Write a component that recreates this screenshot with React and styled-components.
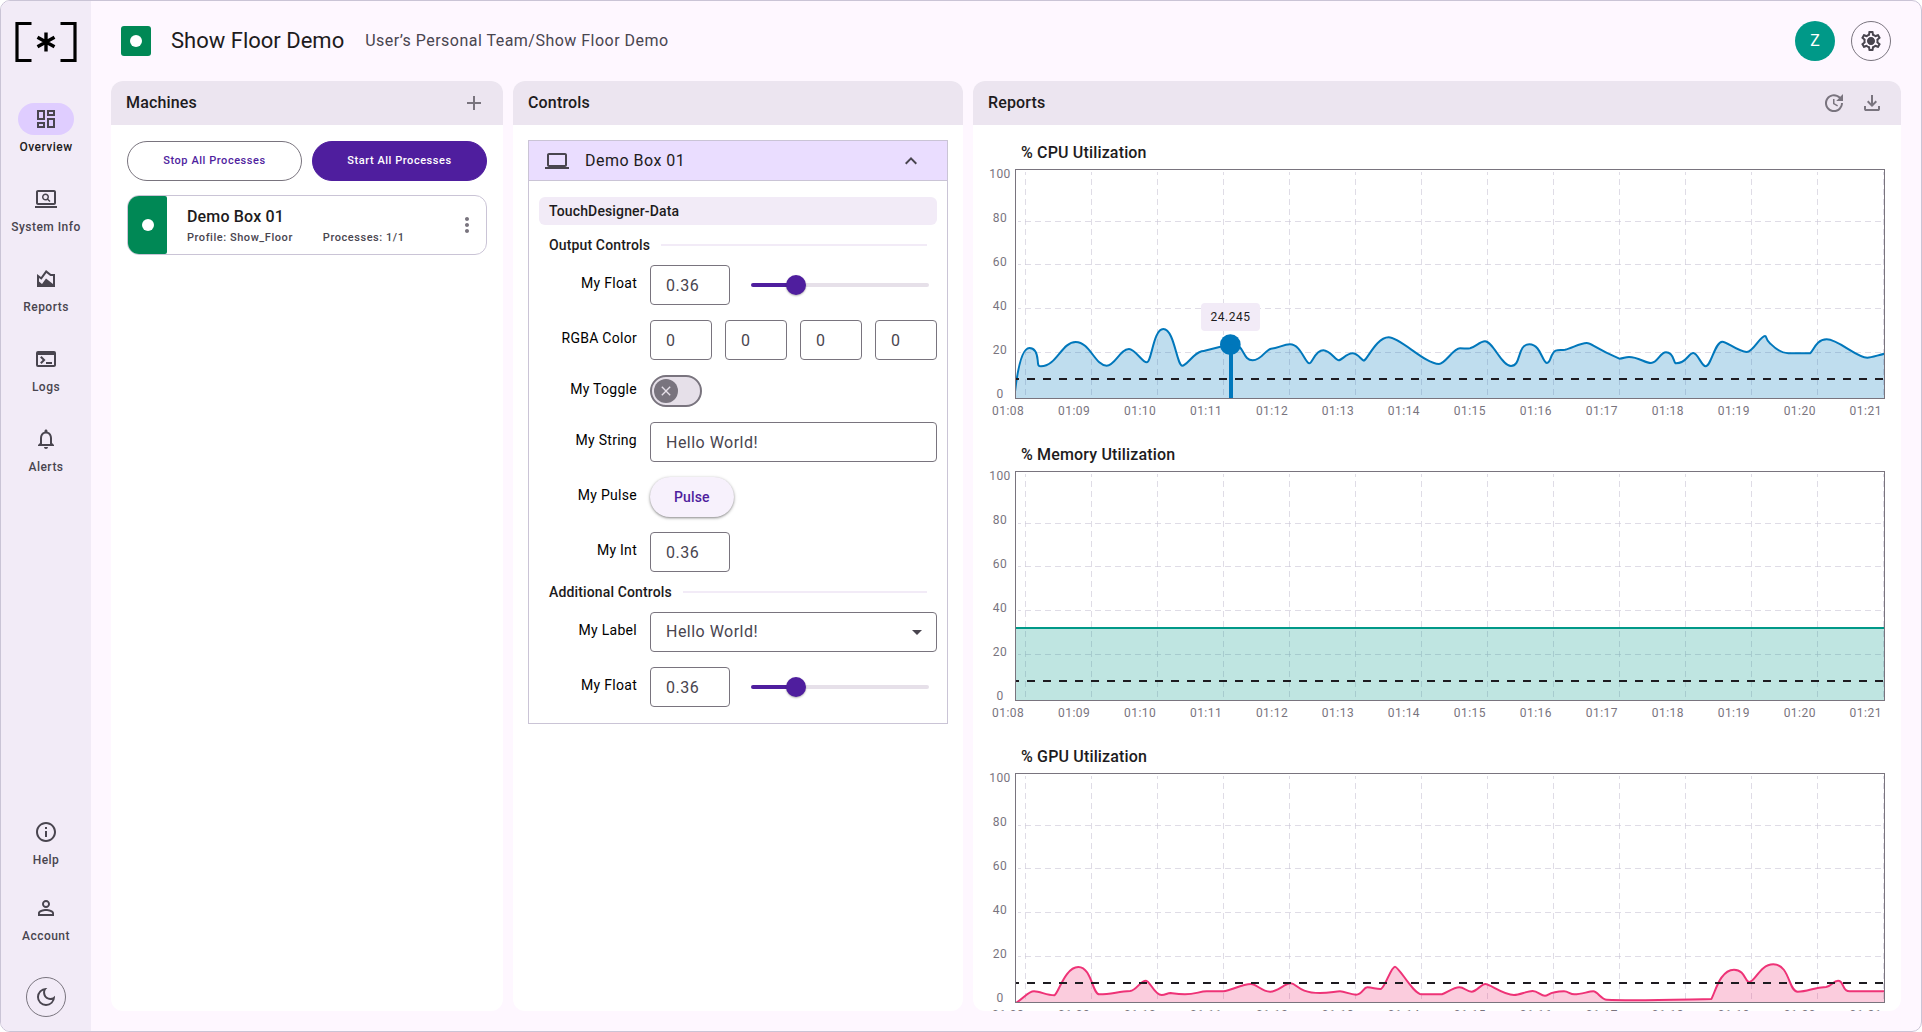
import React from "react";
import styled, { createGlobalStyle } from "styled-components";
import {
  MdOutlineDashboard,
  MdOutlineScreenSearchDesktop,
  MdOutlineAreaChart,
  MdOutlineTerminal,
  MdNotificationsNone,
  MdOutlineInfo,
  MdPersonOutline,
  MdOutlineDarkMode,
  MdOutlineSettings,
  MdUpdate,
  MdAdd,
  MdMoreVert,
  MdOutlineLaptop,
  MdExpandLess,
  MdArrowDropDown,
  MdClose,
} from "react-icons/md";

const color = {
  surface: "#fef7ff",
  surfaceLow: "#f2ebf7",
  surfaceHigh: "#ece5f0",
  white: "#ffffff",
  outline: "#79747e",
  outlineSoft: "#cac4d6",
  text: "#1d1b20",
  textSoft: "#49454f",
  primary: "#4f1e9e",
  primarySoft: "#eaddff",
  active: "#dfcdff",
  track: "#e6e0e9",
  green: "#008855",
  blue: "#0077bb",
  teal: "#009988",
  pink: "#ee3377",
};

const GlobalStyle = createGlobalStyle`
  *, *::before, *::after { box-sizing: border-box; }
  body { margin: 0; background: ${color.white}; }
  body, button, input, select { font-family: Roboto, "Noto Sans", sans-serif; }
  h1, h2, h3, h4, p { margin: 0; font-weight: inherit; }
`;

const Frame = styled.div`
  display: flex;
  height: 100vh;
  border: 1px solid ${color.outlineSoft};
  border-radius: 10px;
  overflow: hidden;
  background: ${color.surface};
  color: ${color.text};
`;

/* Side navigation */

const Sidebar = styled.nav`
  display: flex;
  flex-direction: column;
  align-items: center;
  flex: 0 0 90px;
  padding: 21px 0 14px;
  background: ${color.surfaceLow};
`;

const NavGroup = styled.div`
  display: flex;
  flex-direction: column;
  gap: ${(p) => p.$gap}px;
  margin-top: ${(p) => (p.$bottom ? "auto" : "41px")};
  margin-bottom: ${(p) => (p.$bottom ? "33px" : "0")};
`;

const NavLink = styled.a`
  display: flex;
  flex-direction: column;
  align-items: center;
  gap: 4px;
  font-size: 12px;
  font-weight: 500;
  line-height: 16px;
  letter-spacing: 0.04em;
  text-decoration: none;
  white-space: nowrap;
  color: ${(p) => (p.$active ? color.text : color.textSoft)};
`;

const NavPill = styled.span`
  display: flex;
  align-items: center;
  justify-content: center;
  width: 56px;
  height: 32px;
  border-radius: 16px;
  font-size: 24px;
  color: ${color.textSoft};
  background: ${(p) => (p.$active ? color.active : "transparent")};
`;

const RoundButton = styled.button`
  display: flex;
  align-items: center;
  justify-content: center;
  flex: none;
  width: 40px;
  height: 40px;
  padding: 0;
  border: 1px solid ${color.outline};
  border-radius: 50%;
  background: ${(p) => (p.$plain ? "transparent" : color.surface)};
  color: ${color.textSoft};
  font-size: 24px;
  cursor: pointer;
`;

/* Page header */

const Main = styled.main`
  display: flex;
  flex-direction: column;
  flex: 1;
  min-width: 0;
  padding: 0 20px 20px;
`;

const Header = styled.header`
  display: flex;
  align-items: center;
  flex: 0 0 80px;
  padding: 0 10px;
`;

const StatusBadge = styled.span`
  display: flex;
  align-items: center;
  justify-content: center;
  width: 30px;
  height: 30px;
  margin-right: 20px;
  border-radius: 3px;
  background: ${color.green};
`;

const Dot = styled.span`
  width: 12px;
  height: 12px;
  border-radius: 50%;
  background: ${color.white};
`;

const Title = styled.h1`
  font-size: 22px;
  font-weight: 400;
  line-height: 28px;
`;

const Breadcrumb = styled.p`
  margin-left: 21px;
  font-size: 16px;
  line-height: 24px;
  letter-spacing: 0.03em;
  color: ${color.textSoft};
`;

const HeaderActions = styled.div`
  display: flex;
  gap: 16px;
  margin-left: auto;
`;

const Avatar = styled.button`
  width: 40px;
  height: 40px;
  padding: 0;
  border: 0;
  border-radius: 50%;
  background: ${color.teal};
  color: ${color.white};
  font-size: 16px;
  line-height: 24px;
  cursor: pointer;
`;

/* Panels */

const Columns = styled.div`
  display: grid;
  grid-template-columns: 392px 450px minmax(0, 1fr);
  gap: 10px;
  flex: 1;
  min-height: 0;
`;

const Panel = styled.section`
  display: flex;
  flex-direction: column;
  min-height: 0;
  border-radius: 12px;
  overflow: hidden;
  background: ${color.white};
`;

const PanelHeader = styled.div`
  display: flex;
  align-items: center;
  flex: 0 0 44px;
  gap: 14px;
  padding: 0 17px 0 15px;
  background: ${color.surfaceHigh};
`;

const PanelTitle = styled.h2`
  margin-right: auto;
  font-size: 16px;
  font-weight: 500;
  line-height: 24px;
  letter-spacing: 0.01em;
`;

const IconButton = styled.button`
  display: flex;
  padding: 0;
  border: 0;
  background: none;
  color: ${color.outline};
  font-size: 24px;
  cursor: pointer;
`;

const PanelBody = styled.div`
  flex: 1;
  min-height: 0;
  padding: ${(p) => p.$padding};
  overflow: hidden auto;
  scrollbar-width: none;
`;

/* Machines */

const ButtonRow = styled.div`
  display: grid;
  grid-template-columns: 1fr 1fr;
  gap: 10px;
  margin-bottom: 14px;
`;

const ProcessButton = styled.button`
  height: 40px;
  border: 1px solid ${(p) => (p.$filled ? color.primary : color.outline)};
  border-radius: 20px;
  background: ${(p) => (p.$filled ? color.primary : color.white)};
  color: ${(p) => (p.$filled ? color.white : color.primary)};
  font-size: 11px;
  font-weight: 500;
  line-height: 16px;
  letter-spacing: 0.05em;
  cursor: pointer;
`;

const MachineCard = styled.article`
  display: flex;
  align-items: center;
  height: 60px;
  border: 1px solid ${color.outlineSoft};
  border-radius: 12px;
  overflow: hidden;
`;

const MachineStatus = styled.div`
  display: flex;
  align-items: center;
  justify-content: center;
  align-self: stretch;
  width: 39px;
  margin-right: 20px;
  border-radius: 0 2px 2px 0;
  background: ${color.green};
`;

const MachineInfo = styled.div`
  flex: 1;
  padding-top: 2px;
`;

const MachineName = styled.h3`
  font-size: 16px;
  font-weight: 500;
  line-height: 24px;
  letter-spacing: 0.01em;
`;

const MachineMeta = styled.div`
  display: flex;
  gap: 30px;
  font-size: 11px;
  font-weight: 500;
  line-height: 18px;
  letter-spacing: 0.05em;
  color: ${color.textSoft};
`;

const CardMenu = styled(IconButton)`
  margin-right: 7px;
`;

/* Controls */

const Accordion = styled.div`
  border: 1px solid ${color.outlineSoft};
`;

const AccordionHeader = styled.button`
  display: flex;
  align-items: center;
  width: 100%;
  height: 40px;
  padding: 0 24px 0 16px;
  border: 0;
  border-bottom: 1px solid ${color.outlineSoft};
  background: ${color.primarySoft};
  color: ${color.textSoft};
  font-size: 24px;
  cursor: pointer;
`;

const AccordionTitle = styled.span`
  margin: 0 auto 0 16px;
  color: ${color.text};
  font-size: 16px;
  line-height: 24px;
  letter-spacing: 0.03em;
`;

const AccordionBody = styled.form`
  padding: 16px 10px;
`;

const DataTitle = styled.h3`
  padding: 4px 10px;
  border-radius: 6px;
  background: ${color.surfaceLow};
  font-size: 14px;
  font-weight: 500;
  line-height: 20px;
  letter-spacing: 0.01em;
`;

const GroupTitle = styled.h4`
  display: flex;
  align-items: center;
  gap: 11px;
  padding: 10px;
  font-size: 14px;
  font-weight: 500;
  line-height: 20px;
  letter-spacing: 0.01em;

  &::after {
    content: "";
    flex: 1;
    height: 2px;
    background: ${color.surfaceLow};
  }
`;

const Fields = styled.div`
  display: grid;
  gap: 15px;
`;

const FieldRow = styled.div`
  display: grid;
  grid-template-columns: 98px minmax(0, 1fr);
  align-items: center;
  column-gap: 13px;
`;

const Label = styled.label`
  padding-bottom: 4px;
  font-size: 14px;
  line-height: 20px;
  letter-spacing: 0.02em;
  text-align: right;
  color: #000000;
`;

const FieldContent = styled.div`
  display: flex;
  align-items: center;
  gap: ${(p) => p.$gap || 13}px;
`;

const TextInput = styled.input`
  flex: ${(p) => (p.$narrow ? "0 0 80px" : "1 1 0")};
  width: 0;
  min-width: 0;
  height: 40px;
  padding: 0 15px;
  border: 1px solid ${color.outline};
  border-radius: 4px;
  background: ${color.white};
  color: ${color.textSoft};
  font-size: 16px;
  line-height: 24px;
  letter-spacing: 0.03em;
`;

const Slider = styled.input`
  appearance: none;
  flex: 1;
  min-width: 0;
  height: 20px;
  margin: 0 8px 0 0;
  background: transparent;

  &::-webkit-slider-runnable-track {
    height: 4px;
    border-radius: 2px;
    background: linear-gradient(
      to right,
      ${color.primary} 25%,
      ${color.track} 25%
    );
  }

  &::-webkit-slider-thumb {
    appearance: none;
    width: 20px;
    height: 20px;
    margin-top: -8px;
    border-radius: 50%;
    background: ${color.primary};
    box-shadow: 0 1px 2px rgba(0, 0, 0, 0.3);
  }
`;

const Toggle = styled.span`
  display: grid;
  align-items: center;
  width: 52px;
  height: 32px;
  padding: 2px;
  border: 2px solid ${color.outline};
  border-radius: 16px;
  background: ${color.track};
`;

const ToggleInput = styled.input`
  grid-area: 1 / 1;
  width: 100%;
  height: 100%;
  margin: 0;
  opacity: 0;
`;

const ToggleThumb = styled.span`
  grid-area: 1 / 1;
  display: flex;
  align-items: center;
  justify-content: center;
  width: 24px;
  height: 24px;
  border-radius: 50%;
  background: ${color.outline};
  color: ${color.track};
  font-size: 16px;
  pointer-events: none;
`;

const PulseButton = styled.button`
  height: 40px;
  padding: 0 24px;
  border: 0;
  border-radius: 20px;
  background: #f7f1fc;
  box-shadow: 0 1px 3px 1px rgba(0, 0, 0, 0.15), 0 1px 2px rgba(0, 0, 0, 0.3);
  color: ${color.primary};
  font-size: 14px;
  font-weight: 500;
  line-height: 20px;
  letter-spacing: 0.01em;
  cursor: pointer;
`;

const SelectBox = styled.div`
  display: grid;
  align-items: center;
  flex: 1;
`;

const Select = styled.select`
  grid-area: 1 / 1;
  appearance: none;
  width: 100%;
  height: 40px;
  padding: 0 40px 0 15px;
  border: 1px solid ${color.outline};
  border-radius: 4px;
  background: ${color.white};
  color: ${color.textSoft};
  font-size: 16px;
  line-height: 24px;
  letter-spacing: 0.03em;
`;

const SelectArrow = styled(MdArrowDropDown)`
  grid-area: 1 / 1;
  justify-self: end;
  margin-right: 8px;
  color: ${color.textSoft};
  font-size: 24px;
  pointer-events: none;
`;

/* Reports */

const Report = styled.figure`
  display: grid;
  grid-template-columns: 30px minmax(0, 1fr);
  margin: 0 0 24px;
`;

const ReportTitle = styled.figcaption`
  grid-column: 2;
  padding: 0 6px 4px;
  font-size: 16px;
  font-weight: 500;
  line-height: 24px;
  letter-spacing: 0.01em;
`;

const YAxis = styled.div`
  display: flex;
  flex-direction: column;
  justify-content: space-between;
  height: 236px;
  margin: -3px 0;
`;

const Tick = styled.span`
  font-size: 12px;
  line-height: 16px;
  letter-spacing: 0.04em;
  text-align: center;
  color: ${color.outline};
`;

const XAxis = styled.div`
  grid-column: 1 / -1;
  display: flex;
  justify-content: space-between;
  padding: 4px 3px 0 7px;
`;

const Plot = styled.div`
  position: relative;
  height: 230px;
  border: 1px solid ${color.outline};
`;

const PlotDrawing = styled.svg`
  display: block;
  width: 100%;
  height: 100%;
`;

const Tooltip = styled.output`
  position: absolute;
  bottom: 67px;
  left: 25%;
  width: 59px;
  margin-left: -32px;
  padding: 6px 0;
  border-radius: 4px;
  background: ${color.surfaceLow};
  font-size: 12px;
  line-height: 16px;
  letter-spacing: 0.04em;
  text-align: center;
`;

const NAV_TOP = [
  { label: "Overview", icon: MdOutlineDashboard, active: true },
  { label: "System Info", icon: MdOutlineScreenSearchDesktop },
  { label: "Reports", icon: MdOutlineAreaChart },
  { label: "Logs", icon: MdOutlineTerminal },
  { label: "Alerts", icon: MdNotificationsNone },
];

const NAV_BOTTOM = [
  { label: "Help", icon: MdOutlineInfo },
  { label: "Account", icon: MdPersonOutline },
];

const TIMES = Array.from({ length: 14 }, (_, i) => `01:${String(i + 8).padStart(2, "0")}`);
const LEVELS = [100, 80, 60, 40, 20, 0];
const GRID_X = Array.from({ length: 14 }, (_, i) => 28 + i * 198);
const GRID_Y = [154, 283, 415, 547];

const CPU =
  "M0 668C8 600 22 537 43 537C60 537 66 550 68 573C69 590 70 592 78 592C125 592 140 519 182 519" +
  "C225 519 240 590 275 590C300 590 315 540 342 540C360 540 382 580 395 580C410 580 415 480 445 480" +
  "C478 480 485 590 502 590C515 590 535 553 560 547C590 540 600 538 646 526C690 520 680 574 713 574" +
  "C740 574 750 543 768 539C790 538 805 526 825 526C858 526 870 583 883 583C892 583 900 544 925 544" +
  "C945 544 962 574 971 574C980 574 995 553 1012 553C1030 553 1040 575 1047 575C1058 570 1085 505 1121 505" +
  "C1155 505 1230 585 1272 585C1290 585 1315 538 1335 538C1350 538 1352 540 1365 538C1380 535 1395 517 1410 517" +
  "C1434 517 1460 591 1488 591C1520 591 1505 526 1543 526C1578 526 1582 582 1596 582C1608 582 1606 552 1622 545" +
  "C1632 542 1638 544 1650 542C1670 538 1695 522 1715 522C1730 522 1735 535 1813 569C1825 569 1830 564 1842 564" +
  "C1870 564 1890 582 1908 582C1928 582 1935 550 1953 550C1978 550 1975 583 1983 583C2015 583 2020 552 2035 552" +
  "C2048 552 2060 592 2072 592C2088 592 2100 518 2122 518C2136 518 2170 549 2195 549C2215 549 2235 501 2250 501" +
  "C2256 501 2250 510 2266 524C2285 543 2305 553 2320 553L2385 553C2395 548 2402 511 2435 511" +
  "C2470 511 2525 566 2557 566C2570 566 2590 558 2610 554";

const GPU =
  "M3 690C30 672 40 655 57 655C75 655 95 667 118 667C130 662 150 582 190 582C230 582 232 664 253 664" +
  "C290 664 310 655 345 654C365 652 375 623 393 623C405 623 418 666 440 666C452 666 456 660 467 660" +
  "C480 662 490 664 510 664C540 664 555 655 575 655L625 655C650 652 680 633 708 633C725 633 740 656 765 656" +
  "C790 656 808 631 827 631C845 631 850 660 915 660C945 660 960 655 975 655C990 655 1005 665 1023 665" +
  "C1042 665 1045 643 1057 643C1072 643 1085 649 1098 648C1112 640 1128 581 1140 581C1152 581 1195 664 1220 664" +
  "L1281 664C1295 660 1315 643 1333 643C1348 643 1355 656 1370 656C1385 656 1398 633 1411 633" +
  "C1425 633 1465 666 1497 666C1515 666 1535 654 1553 654C1568 654 1578 668 1590 668C1602 668 1600 656 1647 655" +
  "C1660 655 1665 664 1678 664C1700 664 1720 655 1735 655C1747 655 1760 680 1775 680C1850 684 1980 680 2089 678" +
  "C2100 660 2115 590 2157 590C2190 590 2190 627 2203 627C2220 627 2235 574 2275 574C2325 574 2320 656 2348 656" +
  "C2380 656 2395 643 2433 642C2450 640 2455 623 2469 623C2488 623 2480 655 2504 655L2610 655";

const MEMORY = "M0 471L2610 471";

function LogoMark() {
  return (
    <svg width="62" height="40" viewBox="0 0 62 40" fill="none" stroke="#000" role="img" aria-label="Home">
      <path d="M16.500 1.500H2V38.500H16.500M45.500 1.500H60V38.500H45.500" strokeWidth="3.200" />
      <path d="M31 10.500V29.500M22.500 15.200L39.500 24.800M39.500 15.200L22.500 24.800" strokeWidth="3.400" />
    </svg>
  );
}

function GearIcon() {
  return (
    <svg width="24" height="24" viewBox="0 0 24 24" fill="currentColor" aria-hidden="true">
      <MdOutlineSettings size={24} />
      <circle cx="12" cy="12" r="3.400" />
    </svg>
  );
}

function DownloadIcon() {
  return (
    <svg width="24" height="24" viewBox="0 0 24 24" fill="currentColor" aria-hidden="true">
      <path d="M12 16l-5-5 1.400-1.450 2.600 2.600V4h2v8.150l2.600-2.600L17 11zM6 20q-.825 0-1.412-.587T4 18v-3h2v3h12v-3h2v3q0 .825-.587 1.413T18 20z" />
    </svg>
  );
}

function NavItem({ label, icon: Icon, active }) {
  return (
    <NavLink href="#" $active={active} aria-current={active ? "page" : undefined}>
      <NavPill $active={active}>
        <Icon aria-hidden="true" />
      </NavPill>
      {label}
    </NavLink>
  );
}

function Chart({ title, line, tone, marker }) {
  return (
    <Report>
      <ReportTitle>{title}</ReportTitle>
      <YAxis>
        {LEVELS.map((level) => (
          <Tick key={level}>{level}</Tick>
        ))}
      </YAxis>
      <Plot>
        <PlotDrawing viewBox="3 3 2604 684" preserveAspectRatio="none" aria-hidden="true">
          <g stroke="#c9c5d6" strokeOpacity="0.6" strokeWidth="3" fill="none">
            {GRID_X.map((x) => (
              <path key={x} d={`M${x + 3.5} 9V690`} strokeDasharray="18 12" strokeDashoffset="9" />
            ))}
            {GRID_Y.map((y) => (
              <path key={y} d={`M9 ${y + 3.5}H2610`} strokeDasharray="18 12" strokeDashoffset="9" />
            ))}
          </g>
          <path d={`${line}V690H0Z`} fill={tone} fillOpacity="0.25" />
          <path d={line} fill="none" stroke={tone} strokeWidth="6" strokeLinejoin="round" />
          <path d="M0 630H2610" stroke={color.text} strokeWidth="6" strokeDasharray="24 24" strokeDashoffset="12" />
          {marker && (
            <g fill={tone}>
              <circle cx="646" cy="527" r="31" />
              <rect x="642" y="527" width="12" height="163" />
            </g>
          )}
        </PlotDrawing>
        {marker && <Tooltip>{marker}</Tooltip>}
      </Plot>
      <XAxis>
        {TIMES.map((time) => (
          <Tick key={time}>{time}</Tick>
        ))}
      </XAxis>
    </Report>
  );
}

function Field({ id, label, gap, children }) {
  return (
    <FieldRow>
      <Label htmlFor={id}>{label}</Label>
      <FieldContent $gap={gap}>{children}</FieldContent>
    </FieldRow>
  );
}

function FloatField({ id }) {
  return (
    <Field id={id} label="My Float" gap={21}>
      <TextInput id={id} $narrow defaultValue="0.36" />
      <Slider type="range" min="0" max="100" defaultValue="22" aria-label="My Float slider" />
    </Field>
  );
}

export default function App() {
  return (
    <>
      <GlobalStyle />
      <Frame>
        <Sidebar aria-label="Main">
          <LogoMark />
          <NavGroup $gap={28}>
            {NAV_TOP.map((item) => (
              <NavItem key={item.label} {...item} />
            ))}
          </NavGroup>
          <NavGroup $gap={24} $bottom>
            {NAV_BOTTOM.map((item) => (
              <NavItem key={item.label} {...item} />
            ))}
          </NavGroup>
          <RoundButton $plain aria-label="Dark mode">
            <MdOutlineDarkMode />
          </RoundButton>
        </Sidebar>

        <Main>
          <Header>
            <StatusBadge>
              <Dot />
            </StatusBadge>
            <Title>Show Floor Demo</Title>
            <Breadcrumb>User’s Personal Team/Show Floor Demo</Breadcrumb>
            <HeaderActions>
              <Avatar>Z</Avatar>
              <RoundButton aria-label="Settings">
                <GearIcon />
              </RoundButton>
            </HeaderActions>
          </Header>

          <Columns>
            <Panel>
              <PanelHeader>
                <PanelTitle>Machines</PanelTitle>
                <IconButton aria-label="Add machine">
                  <MdAdd />
                </IconButton>
              </PanelHeader>
              <PanelBody $padding="16px">
                <ButtonRow>
                  <ProcessButton>Stop All Processes</ProcessButton>
                  <ProcessButton $filled>Start All Processes</ProcessButton>
                </ButtonRow>
                <MachineCard>
                  <MachineStatus>
                    <Dot />
                  </MachineStatus>
                  <MachineInfo>
                    <MachineName>Demo Box 01</MachineName>
                    <MachineMeta>
                      <span>Profile: Show_Floor</span>
                      <span>Processes: 1/1</span>
                    </MachineMeta>
                  </MachineInfo>
                  <CardMenu aria-label="Machine menu">
                    <MdMoreVert />
                  </CardMenu>
                </MachineCard>
              </PanelBody>
            </Panel>

            <Panel>
              <PanelHeader>
                <PanelTitle>Controls</PanelTitle>
              </PanelHeader>
              <PanelBody $padding="15px">
                <Accordion>
                  <AccordionHeader aria-expanded="true">
                    <MdOutlineLaptop aria-hidden="true" />
                    <AccordionTitle>Demo Box 01</AccordionTitle>
                    <MdExpandLess aria-hidden="true" />
                  </AccordionHeader>
                  <AccordionBody>
                    <DataTitle>TouchDesigner-Data</DataTitle>
                    <GroupTitle>Output Controls</GroupTitle>
                    <Fields>
                      <FloatField id="output-float" />
                      <Field id="rgba-0" label="RGBA Color">
                        {["Red", "Green", "Blue", "Alpha"].map((channel, i) => (
                          <TextInput key={channel} id={`rgba-${i}`} aria-label={channel} defaultValue="0" />
                        ))}
                      </Field>
                      <Field id="toggle" label="My Toggle">
                        <Toggle>
                          <ToggleInput type="checkbox" role="switch" id="toggle" />
                          <ToggleThumb>
                            <MdClose />
                          </ToggleThumb>
                        </Toggle>
                      </Field>
                      <Field id="string" label="My String">
                        <TextInput id="string" defaultValue="Hello World!" />
                      </Field>
                      <Field id="pulse" label="My Pulse">
                        <PulseButton id="pulse" type="button">
                          Pulse
                        </PulseButton>
                      </Field>
                      <Field id="int" label="My Int">
                        <TextInput id="int" $narrow defaultValue="0.36" />
                      </Field>
                    </Fields>
                    <GroupTitle>Additional Controls</GroupTitle>
                    <Fields>
                      <Field id="label" label="My Label">
                        <SelectBox>
                          <Select id="label">
                            <option>Hello World!</option>
                          </Select>
                          <SelectArrow aria-hidden="true" />
                        </SelectBox>
                      </Field>
                      <FloatField id="additional-float" />
                    </Fields>
                  </AccordionBody>
                </Accordion>
              </PanelBody>
            </Panel>

            <Panel>
              <PanelHeader>
                <PanelTitle>Reports</PanelTitle>
                <IconButton aria-label="Update">
                  <MdUpdate />
                </IconButton>
                <IconButton aria-label="Download">
                  <DownloadIcon />
                </IconButton>
              </PanelHeader>
              <PanelBody $padding="16px 16px 0 12px">
                <Chart title="% CPU Utilization" line={CPU} tone={color.blue} marker="24.245" />
                <Chart title="% Memory Utilization" line={MEMORY} tone={color.teal} />
                <Chart title="% GPU Utilization" line={GPU} tone={color.pink} />
              </PanelBody>
            </Panel>
          </Columns>
        </Main>
      </Frame>
    </>
  );
}
